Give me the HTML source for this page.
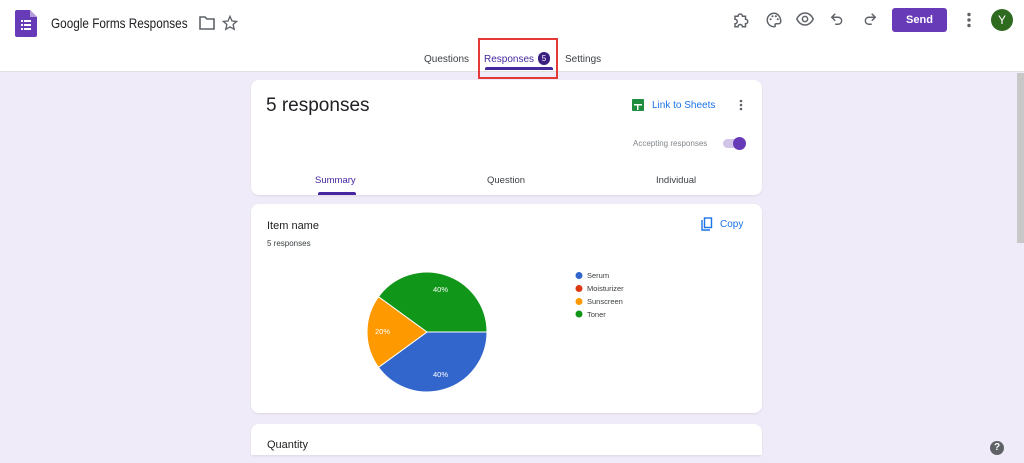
<!DOCTYPE html>
<html><head><style>
*{margin:0;padding:0;box-sizing:border-box}
body{width:1024px;height:463px;overflow:hidden;background:#f0ebf8;font-family:"Liberation Sans",Arial,sans-serif;position:relative;color:#202124}
.hdr{position:absolute;left:0;top:0;width:1024px;height:72px;background:#fff;border-bottom:1px solid #e0e0e0}
.a{position:absolute}
.card{position:absolute;left:251px;width:511px;background:#fff;border-radius:8px;box-shadow:0 1px 2px rgba(0,0,0,.08)}
.t{position:absolute;white-space:nowrap}
</style></head><body>
<div class="hdr">
 <svg class="a" style="left:15px;top:10px" width="22" height="27" viewBox="0 0 22 27"><path d="M0 2Q0 0 2 0H15L22 7V25Q22 27 20 27H2Q0 27 0 25Z" fill="#673ab7"/><path d="M15 0V7H22Z" fill="#b39ddb"/><g fill="#fff"><rect x="6" y="10" width="2" height="2"/><rect x="6" y="14" width="2" height="2"/><rect x="6" y="18" width="2" height="2"/><rect x="9" y="10" width="7" height="2"/><rect x="9" y="14" width="7" height="2"/><rect x="9" y="18" width="7" height="2"/></g></svg>
 <div class="t" style="left:51px;top:15px;font-size:14px;color:#202124;transform:scaleX(0.84);transform-origin:0 0">Google Forms Responses</div>
 <svg class="a" style="left:199px;top:16px" width="16" height="14" viewBox="0 0 16 14"><path d="M1 1H6L8 3H15V13H1Z" fill="none" stroke="#5f6368" stroke-width="1.6"/></svg>
 <svg class="a" style="left:222px;top:15px" width="16" height="16" viewBox="0 0 24 24"><path d="M12 2l3 7 7 .6-5.3 4.7 1.6 7.2L12 17.8 5.7 21.5l1.6-7.2L2 9.6 9 9z" fill="none" stroke="#5f6368" stroke-width="2"/></svg>
 <svg class="a" style="left:732px;top:11px" width="18" height="18" viewBox="0 0 24 24"><path d="M4 7h4a3 3 0 016 0h4v4a3 3 0 010 6v4h-4a3 3 0 00-6 0H4v-4a3 3 0 000-6z" fill="none" stroke="#5f6368" stroke-width="2"/></svg>
 <svg class="a" style="left:765px;top:11px" width="18" height="18" viewBox="0 0 24 24"><path d="M12 3a9 9 0 000 18c1.5 0 2-1 1.5-2s0-2 1.5-2H18a3 3 0 003-3c0-6-4-11-9-11z" fill="none" stroke="#5f6368" stroke-width="2"/><circle cx="7.5" cy="11" r="1.4" fill="#5f6368"/><circle cx="10" cy="7" r="1.4" fill="#5f6368"/><circle cx="14.5" cy="7" r="1.4" fill="#5f6368"/><circle cx="17" cy="11" r="1.4" fill="#5f6368"/></svg>
 <svg class="a" style="left:796px;top:12px" width="18" height="14" viewBox="0 0 24 18"><path d="M1 9C4 3 8 1 12 1s8 2 11 8c-3 6-7 8-11 8S4 15 1 9z" fill="none" stroke="#5f6368" stroke-width="2"/><circle cx="12" cy="9" r="3.5" fill="none" stroke="#5f6368" stroke-width="2"/></svg>
 <svg class="a" style="left:830px;top:12px" width="14" height="14" viewBox="0 0 24 24"><path d="M9 3L3 9l6 6M3 9h11a6 6 0 010 12H9" fill="none" stroke="#5f6368" stroke-width="2.5"/></svg>
 <svg class="a" style="left:863px;top:12px" width="14" height="14" viewBox="0 0 24 24"><path d="M15 3l6 6-6 6M21 9H10a6 6 0 000 12h5" fill="none" stroke="#5f6368" stroke-width="2.5"/></svg>
 <div class="a" style="left:892px;top:8px;width:55px;height:24px;background:#673ab7;border-radius:3px;color:#fff;font-size:11px;font-weight:bold;text-align:center;line-height:24px">Send</div>
 <svg class="a" style="left:966px;top:12px" width="6" height="16"><circle cx="3" cy="2.5" r="1.7" fill="#5f6368"/><circle cx="3" cy="8" r="1.7" fill="#5f6368"/><circle cx="3" cy="13.5" r="1.7" fill="#5f6368"/></svg>
 <div class="a" style="left:991px;top:9px;width:22px;height:22px;border-radius:50%;background:#2e6b1f;color:#fff;font-size:12px;text-align:center;line-height:22px">Y</div>
 <div class="t" style="left:424px;top:54px;font-size:10px;color:#3c4043">Questions</div>
 <div class="t" style="left:484px;top:54px;font-size:10px;color:#4527a0">Responses</div>
 <div class="a" style="left:538px;top:52px;width:12px;height:13px;border-radius:6px;background:#3b1f80;color:#fff;font-size:8px;text-align:center;line-height:13px">5</div>
 <div class="t" style="left:565px;top:54px;font-size:10px;color:#3c4043">Settings</div>
 <div class="a" style="left:485px;top:67px;width:68px;height:3px;background:#4527a0;border-radius:2px 2px 0 0"></div>
 <div class="a" style="left:478px;top:38px;width:80px;height:41px;border:2px solid #e53935"></div>
</div>
<div class="a" style="left:1017px;top:73px;width:7px;height:170px;background:#c8c8c8"></div>
<div class="card" style="top:80px;height:115px">
 <div class="t" style="left:15px;top:15px;font-size:19px;color:#202124">5 responses</div>
 <svg class="a" style="left:381px;top:19px" width="12" height="12"><rect width="12" height="12" rx="1" fill="#1e8e3e"/><rect x="2" y="5" width="8" height="1.5" fill="#fff"/><rect x="5" y="5" width="1.5" height="6" fill="#fff"/></svg>
 <div class="t" style="left:401px;top:20px;font-size:10px;color:#1a73e8">Link to Sheets</div>
 <svg class="a" style="left:488px;top:19px" width="4" height="12"><circle cx="2" cy="2" r="1.3" fill="#5f6368"/><circle cx="2" cy="6" r="1.3" fill="#5f6368"/><circle cx="2" cy="10" r="1.3" fill="#5f6368"/></svg>
 <div class="t" style="left:382px;top:59px;font-size:8px;color:#80868b">Accepting responses</div>
 <div class="a" style="left:472px;top:59px;width:22px;height:9px;border-radius:5px;background:#d1c4e9"></div>
 <div class="a" style="left:482px;top:57px;width:13px;height:13px;border-radius:50%;background:#673ab7"></div>
 <div class="t" style="left:64px;top:95px;font-size:9.5px;color:#4527a0">Summary</div>
 <div class="t" style="left:236px;top:95px;font-size:9.5px;color:#3c4043">Question</div>
 <div class="t" style="left:405px;top:95px;font-size:9.5px;color:#3c4043">Individual</div>
 <div class="a" style="left:67px;top:112px;width:38px;height:3px;background:#4527a0;border-radius:2px 2px 0 0"></div>
</div>
<div class="card" style="top:204px;height:209px">
 <div class="t" style="left:16px;top:16px;font-size:11px;color:#202124">Item name</div>
 <div class="t" style="left:16px;top:35px;font-size:8px;color:#3c4043">5 responses</div>
 <svg class="a" style="left:450px;top:13px" width="12" height="14" viewBox="0 0 12 14"><path d="M1 3V13H9" fill="none" stroke="#1a73e8" stroke-width="1.4"/><rect x="3.5" y="1" width="7" height="9.5" fill="none" stroke="#1a73e8" stroke-width="1.4"/></svg>
 <div class="t" style="left:469px;top:15px;font-size:10px;color:#1a73e8">Copy</div>
</div>
<svg class="a" style="left:0;top:0" width="1024" height="463">
 <path d="M427 332L487 332A60 60 0 0 1 378.5 367.3Z" fill="#3366cc" stroke="#fff" stroke-width="1"/>
 <path d="M427 332L378.5 367.3A60 60 0 0 1 378.5 296.7Z" fill="#ff9900" stroke="#fff" stroke-width="1"/>
 <path d="M427 332L378.5 296.7A60 60 0 0 1 487 332Z" fill="#109618" stroke="#fff" stroke-width="1"/>
 <g font-family="Liberation Sans,Arial" font-size="7.5" fill="#fff"><text x="433" y="292">40%</text><text x="375" y="334">20%</text><text x="433" y="377">40%</text></g>
 <circle cx="579" cy="275.5" r="3.5" fill="#3366cc"/><circle cx="579" cy="288.5" r="3.5" fill="#dc3912"/><circle cx="579" cy="301.5" r="3.5" fill="#ff9900"/><circle cx="579" cy="314" r="3.5" fill="#109618"/>
 <g font-family="Liberation Sans,Arial" font-size="7.5" fill="#3c4043"><text x="587" y="278">Serum</text><text x="587" y="291">Moisturizer</text><text x="587" y="304">Sunscreen</text><text x="587" y="317">Toner</text></g>
</svg>
<div class="card" style="top:424px;height:31px;border-radius:8px 8px 0 0">
 <div class="t" style="left:16px;top:15px;font-size:11px;color:#202124">Quantity</div>
</div>
<div class="a" style="left:990px;top:441px;width:14px;height:14px;border-radius:50%;background:#5f6368;color:#fff;font-size:10px;font-weight:bold;text-align:center;line-height:14px">?</div>
</body></html>
